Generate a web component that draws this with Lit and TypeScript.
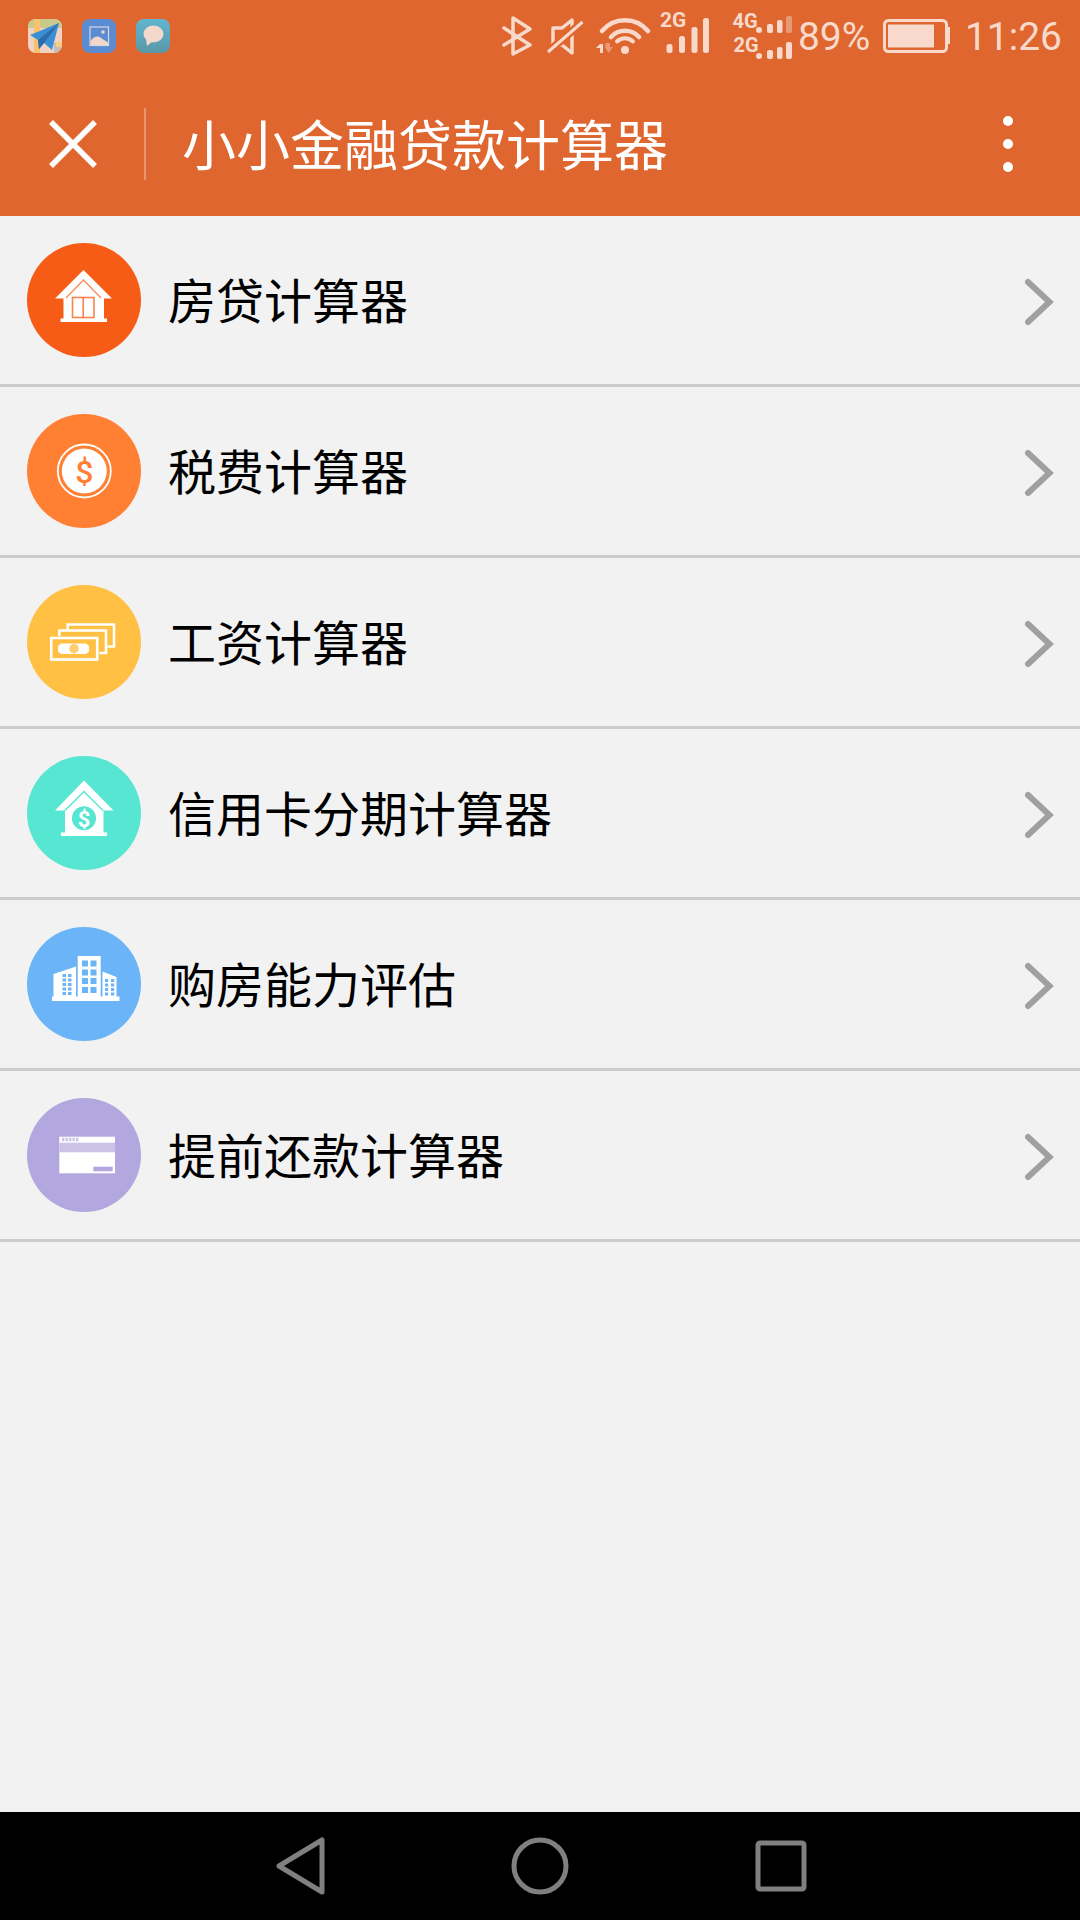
import { LitElement, html, svg, css, unsafeCSS } from 'lit';
import { customElement } from 'lit/decorators.js';

const ORANGE = '#df672f';
const TINT = '#f8d9cb';

// ---- Row icons, drawn in the 114x114 box of the coloured circle ----

const houseIcon = (c: string) => svg`
  <path d="M56.5 27 L85 55.5 H77 V75.5 H80 V79 H33.5 V75.5 H36.5 V55.5 H28 Z" fill="#fff"/>
  <path d="M39 55 L56.5 37 L74 55" fill="none" stroke="${c}" stroke-width="1.4" opacity=".7"/>
  <rect x="45.5" y="54.5" width="21.5" height="20" fill="#fff" stroke="${c}" stroke-width="1.6" opacity=".75"/>
  <path d="M56.2 54.5 V74.5" stroke="${c}" stroke-width="1.6" opacity=".75"/>
`;

const coinIcon = (c: string) => svg`
  <circle cx="57.3" cy="57" r="26.5" fill="none" stroke="#fff" stroke-width="1.8"/>
  <circle cx="57.3" cy="57" r="22.5" fill="#fff"/>
  <text x="57.3" y="68.500" text-anchor="middle" font-family="Roboto, sans-serif" font-weight="500" font-size="32" fill="${c}">$</text>
`;

const notesIcon = (c: string) => svg`
  <path d="M40.7 44 V39.5 H87 V61.5 H80.5" fill="none" stroke="#fff" stroke-width="2.6"/>
  <path d="M32.3 51 V45.5 H79 V68 H72.5" fill="none" stroke="#fff" stroke-width="2.6"/>
  <rect x="24.2" y="53" width="46" height="21.5" fill="none" stroke="#fff" stroke-width="2.6"/>
  <path d="M34 58.5 H59 L62 61 V66.5 L59 69 H34 L31 66.5 V61 Z" fill="#fff"/>
  <circle cx="47" cy="63.7" r="4.8" fill="${c}" opacity=".75"/>
`;

const loanHouseIcon = (c: string) => svg`
  <path d="M57 24.5 L86.5 54.5 H76.5 V76.5 H80 V80 H34 V76.5 H38 V54.5 H28 Z" fill="#fff"/>
  <path d="M38 54.5 L57 35.5 L76 54.5" fill="none" stroke="${c}" stroke-width="1.4"/>
  <circle cx="57" cy="62.3" r="12" fill="${c}"/>
  <text x="57" y="70.5" text-anchor="middle" font-family="Roboto, sans-serif" font-weight="700" font-size="22" fill="#fff">$</text>
`;

const windows = (xs: number[], ys: number[], w: number, h: number, c: string) =>
  ys.map((y) => xs.map((x) => svg`<rect x="${x}" y="${y}" width="${w}" height="${h}" fill="${c}"/>`));

const buildingsIcon = (c: string) => svg`
  <path d="M25 69.5 H26.5 V47 L49 39.5 V69.5 H50.7 V29 H73.7 V69.5 H75.5 V44.5 L89.5 50 V69.5 H92.5 V74 H25 Z" fill="#fff"/>
  ${windows([55, 63.5], [33.5, 42.5, 51, 60], 6, 6, c)}
  ${windows([35.5, 41], [47, 51.5, 56, 60.5, 65], 3.5, 3, c)}
  ${windows([78, 84], [52, 56.5, 61, 65.5], 3.2, 3, c)}
`;

const cardIcon = (c: string) => svg`
  <rect x="32.3" y="38.7" width="55.7" height="36.6" fill="#fff"/>
  <rect x="32.3" y="44.7" width="55.7" height="9.6" fill="#cbc2e8"/>
  ${[35, 38.5, 42, 45.5, 49].map((x) => svg`<rect x="${x}" y="39.7" width="2.4" height="3.6" fill="#cbc2e8"/>`)}
  <rect x="66.3" y="68.7" width="19.4" height="4.6" fill="${c}"/>
`;

const ROWS = [
  { label: '房贷计算器', color: '#f75c16', icon: houseIcon },
  { label: '税费计算器', color: '#ff7f33', icon: coinIcon },
  { label: '工资计算器', color: '#ffc044', icon: notesIcon },
  { label: '信用卡分期计算器', color: '#56e6d2', icon: loanHouseIcon },
  { label: '购房能力评估', color: '#6bb4f7', icon: buildingsIcon },
  { label: '提前还款计算器', color: '#b2a7de', icon: cardIcon },
];

@customElement('app-root')
export class AppRoot extends LitElement {
  static styles = css`
    :host {
      display: flex;
      flex-direction: column;
      width: 1080px;
      height: 1920px;
      background: #f2f2f2;
      font-family: "Noto Sans CJK SC", "Noto Sans", sans-serif;
    }

    /* ---- Status bar ---- */
    .status {
      display: flex;
      align-items: center;
      height: 72px;
      padding: 0 18px 0 28px;
      background: ${unsafeCSS(ORANGE)};
      color: ${unsafeCSS(TINT)};
      font-family: Roboto, sans-serif;
    }
    .apps { display: flex; gap: 20px; margin-right: auto; }
    .app { display: block; width: 34px; height: 34px; border-radius: 8px; }
    .tray { display: block; height: 72px; }
    .percent { font-size: 39px; width: 70px; margin: 2px 0 0 4px; white-space: nowrap; }
    .battery { display: block; margin-left: 15px; }
    .clock { font-size: 39px; margin: 2px 0 0 15px; white-space: nowrap; }

    /* ---- Toolbar ---- */
    .toolbar {
      display: flex;
      align-items: center;
      height: 144px;
      background: ${unsafeCSS(ORANGE)};
      color: #fff;
    }
    .close { display: block; margin-left: 49px; }
    .divider {
      width: 2px;
      height: 72px;
      margin: 0 36px 0 47px;
      background: rgba(255, 255, 255, 0.3);
    }
    .title { flex: 1; padding-bottom: 2px; font-size: 54px; line-height: 1; white-space: nowrap; }
    .more { display: flex; flex-direction: column; gap: 13px; margin-right: 67px; }
    .more span { width: 10px; height: 10px; border-radius: 50%; background: #fff; }

    /* ---- List ---- */
    .list { flex: 1; }
    .row {
      display: flex;
      align-items: center;
      box-sizing: border-box;
      height: 171px;
      padding: 0 25px 0 27px;
      border-bottom: 3px solid #ccc;
    }
    .badge { display: block; width: 114px; height: 114px; flex: none; }
    .label {
      flex: 1;
      margin-left: 27px;
      padding-bottom: 4px;
      font-size: 48px;
      line-height: 1;
      color: #000;
      white-space: nowrap;
    }
    .chevron { display: block; margin-top: 3px; }

    /* ---- Navigation bar ---- */
    .nav { display: block; height: 108px; background: #000; }
  `;

  render() {
    return html`
      <div class="status">
        <div class="apps">
          <svg class="app" viewBox="0 0 34 34">
            <rect width="34" height="34" fill="#f2d3c3"/>
            <rect x="0" y="0" width="34" height="9" fill="#c9c98c"/>
            <rect x="6" y="0" width="6" height="34" fill="#f8c26c"/>
            <rect x="26" y="24" width="8" height="10" fill="#c2bcba"/>
            <rect x="28" y="23" width="6" height="5" fill="#f9cd79"/>
            <path d="M2 16 L31 4 L24 31 L16 24 L11 30 L10 21 Z" fill="#3a8fd4"/>
            <path d="M10 21 L31 4 L16 24 L11 30 Z" fill="#2d6cab"/>
          </svg>
          <svg class="app" viewBox="0 0 34 34">
            <rect width="34" height="34" fill="#5b8cd2"/>
            <rect x="8" y="8" width="18.500" height="18.500" fill="#5b8cd2" stroke="#d8d6de" stroke-width="1.200"/>
            <path d="M8.500 22 Q14 15 19 19 L26 23.500 V26 H8.500 Z" fill="#f2d6ca"/>
            <circle cx="21" cy="13" r="1.800" fill="#f2d6ca"/>
          </svg>
          <svg class="app" viewBox="0 0 34 34">
            <defs>
              <linearGradient id="bubble-bg" x1="0" y1="0" x2="0" y2="1">
                <stop offset="0" stop-color="#60b6cf"/>
                <stop offset="1" stop-color="#5a97a8"/>
              </linearGradient>
            </defs>
            <rect width="34" height="34" fill="url(#bubble-bg)"/>
            <ellipse cx="17.500" cy="15" rx="10" ry="8.500" fill="#f3d8cc"/>
            <path d="M10 20 L11 27 L17 22 Z" fill="#f3d8cc"/>
          </svg>
        </div>

        <svg class="tray" width="293" height="72" viewBox="501 0 293 72" fill="none" stroke="${TINT}">
          <!-- bluetooth -->
          <path d="M504 28 L530 45 L513 54 V18 L530 29 L504 45" stroke-width="3.500" stroke-linejoin="round" stroke-linecap="round"/>
          <!-- muted speaker -->
          <path d="M572 20 L562 28 H553 V45 H562 L572 53 Z" stroke-width="3.500" stroke-linejoin="round"/>
          <path d="M548 52 L582.500 22" stroke="${ORANGE}" stroke-width="8"/>
          <path d="M548 52 L582.500 22" stroke-width="3"/>
          <!-- wifi -->
          <path d="M602 31 A30 30 0 0 1 648 31" stroke-width="4.500" stroke-linecap="round"/>
          <path d="M611 37 A19 19 0 0 1 639 37" stroke-width="4.500" stroke-linecap="round"/>
          <path d="M617 41.500 A11.700 11.700 0 0 1 633 41.500" stroke-width="4" stroke-linecap="round"/>
          <circle cx="625" cy="50" r="4" fill="${TINT}" stroke="none"/>
          <rect x="600" y="44" width="3" height="9" fill="${TINT}" stroke="none"/>
          <path d="M596 48 L600 44 V48 Z" fill="${TINT}" stroke="none"/>
          <path d="M606 43 H610 V47 H613 L608.500 53 L605 47 Z" fill="#e89a78" stroke="none"/>
          <!-- sim 1 -->
          <text x="660" y="27" font-family="Roboto, sans-serif" font-weight="700" font-size="21" fill="${TINT}" stroke="none">2G</text>
          <g fill="${TINT}" stroke="none">
            <rect x="666.500" y="44" width="6" height="9" rx="2.500"/>
            <rect x="679" y="36" width="6" height="17" rx="2.500"/>
            <rect x="691.500" y="27" width="6" height="26" rx="2.500"/>
            <rect x="703" y="18" width="6" height="35" rx="2.500"/>
          </g>
          <!-- sim 2 -->
          <g font-family="Roboto, sans-serif" font-weight="700" font-size="20" fill="${TINT}" stroke="none">
            <text x="732.500" y="28">4G</text>
            <text x="733.500" y="52">2G</text>
          </g>
          <g fill="${TINT}" stroke="none">
            <rect x="756" y="27" width="6" height="6" rx="3"/>
            <rect x="767" y="24" width="6" height="9" rx="2"/>
            <rect x="777" y="20" width="5.500" height="13" rx="2"/>
            <rect x="786" y="16" width="6" height="17" rx="2" fill="#e89a78"/>
            <rect x="756" y="53" width="6" height="6" rx="3"/>
            <rect x="767" y="50" width="6" height="9" rx="2"/>
            <rect x="777" y="47" width="5.500" height="12" rx="2"/>
            <rect x="786" y="42" width="6" height="17" rx="2"/>
          </g>
        </svg>

        <span class="percent">89%</span>

        <svg class="battery" width="67" height="34" viewBox="0 0 67 34">
          <rect x="1.500" y="1.500" width="62" height="31" rx="4" fill="none" stroke="${TINT}" stroke-width="3"/>
          <rect x="5" y="5.500" width="46" height="23" fill="${TINT}"/>
          <path d="M65 8 H67 V25 H65 Z" fill="${TINT}"/>
        </svg>

        <span class="clock">11:26</span>
      </div>

      <div class="toolbar">
        <svg class="close" width="48" height="48" viewBox="0 0 48 48">
          <path d="M2 2 L46 46 M46 2 L2 46" stroke="#fff" stroke-width="5.500" fill="none"/>
        </svg>
        <div class="divider"></div>
        <div class="title">小小金融贷款计算器</div>
        <div class="more"><span></span><span></span><span></span></div>
      </div>

      <div class="list">
        ${ROWS.map((row) => html`
          <div class="row">
            <svg class="badge" viewBox="0 0 114 114">
              <circle cx="57" cy="57" r="57" fill="${row.color}"/>
              ${row.icon(row.color)}
            </svg>
            <div class="label">${row.label}</div>
            <svg class="chevron" width="30" height="48" viewBox="0 0 30 48">
              <path d="M3 4 L24.500 24 L3 44" fill="none" stroke="#a0a0a0" stroke-width="6" stroke-linecap="round"/>
            </svg>
          </div>
        `)}
      </div>

      <svg class="nav" width="1080" height="108" viewBox="0 1812 1080 108" fill="none" stroke="#808080" stroke-width="5">
        <path d="M279 1866 L322 1840 V1892 Z" stroke-linejoin="round"/>
        <circle cx="540" cy="1866" r="26"/>
        <rect x="758" y="1843" width="46" height="46" rx="2"/>
      </svg>
    `;
  }
}
